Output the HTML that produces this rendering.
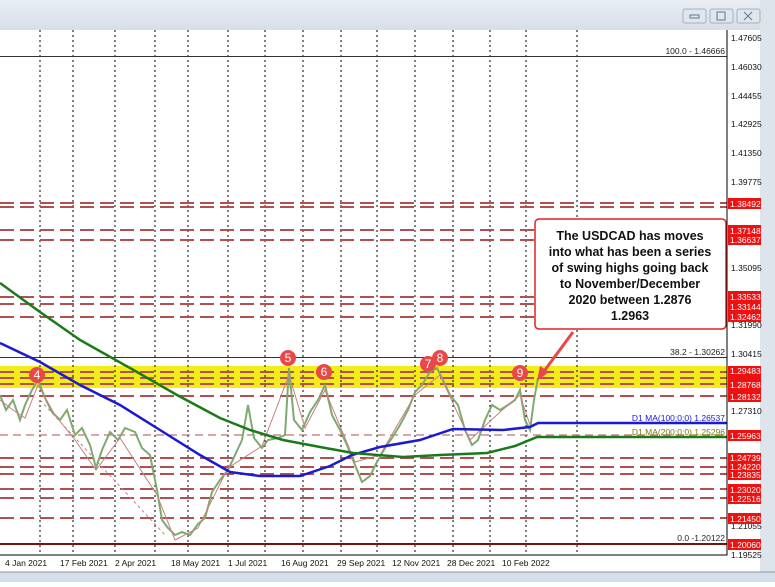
<!DOCTYPE html>
<html><head><meta charset="utf-8"><style>
body{margin:0;width:775px;height:582px;overflow:hidden;background:#fff;font-family:"Liberation Sans",sans-serif}
</style></head><body>
<svg width="775" height="582" xmlns="http://www.w3.org/2000/svg" font-family="Liberation Sans, sans-serif">
<defs><linearGradient id="tb" x1="0" y1="0" x2="0" y2="1"><stop offset="0" stop-color="#e9eef4"/><stop offset="1" stop-color="#d6dee8"/></linearGradient></defs>
<rect width="775" height="582" fill="#fff"/>
<rect width="775" height="30" fill="url(#tb)"/>
<rect x="760" y="0" width="15" height="582" fill="#dde4ec"/>
<rect x="0" y="572" width="775" height="10" fill="#d6dee8"/>
<line x1="0" y1="572" x2="775" y2="572" stroke="#8a96a6"/>
<g fill="#dfe6ee" stroke="#a4b0c0"><rect x="683" y="9" width="23" height="14" rx="2"/><rect x="710" y="9" width="23" height="14" rx="2"/><rect x="737" y="9" width="23" height="14" rx="2"/></g>
<g stroke="#6a7686" fill="none"><rect x="690" y="15" width="9" height="3"/><rect x="717" y="12" width="8" height="8"/><path d="M744 12l8 8M752 12l-8 8"/></g>
<rect x="0" y="30" width="727" height="525" fill="#fff"/>
<rect x="0" y="366" width="727" height="22" fill="#f3ec1a"/>
<g stroke="#000" stroke-width="1" stroke-dasharray="2,3">
<path d="M40 30V555M73 30V555M115 30V555M155 30V555M188 30V555M228 30V555M265 30V555M303 30V555M341 30V555M377 30V555M415 30V555M453 30V555M490 30V555M526 30V555M577 30V555"/></g>
<g stroke="#333" stroke-width="1"><path d="M0 56.5H727M0 357.5H727"/></g>
<path d="M0 544H727" stroke="#7a1010" stroke-width="2"/>
<g stroke="#b05050" stroke-width="2" stroke-dasharray="14,6">
<path d="M0 203H727M0 207H727M0 230H727M0 240H727M0 297H727M0 304H727M0 317H727M0 372H727M0 378H727M0 384H727M0 396H727M0 458H727M0 467H727M0 474H727M0 489H727M0 498H727M0 518H727"/></g>
<path d="M0 435H727" stroke="#b05050" stroke-width="1" stroke-dasharray="8,5"/>
<path d="M40 400L165 535" stroke="#c08080" stroke-dasharray="3,3" fill="none"/>
<polyline fill="none" stroke="#7faa6f" stroke-width="2" points="0,395 6,410 13,400 20,420 25,405 32,390 38,380 45,398 52,412 60,420 67,410 75,435 82,428 90,445 96,468 102,450 110,432 118,440 125,428 135,432 142,448 150,455 157,490 162,520 168,528 175,535 182,532 190,535 198,524 205,518 212,492 220,480 228,470 235,455 242,440 248,405 254,438 262,448 268,440 278,438 285,435 289,368 294,420 302,430 310,412 318,400 325,385 332,415 340,430 347,445 355,465 362,482 370,476 377,462 385,448 392,438 400,425 408,410 415,392 422,385 430,372 437,368 443,380 450,395 458,405 465,430 472,445 478,440 485,420 492,405 500,410 508,405 515,400 520,390 525,420 530,430 534,400 538,378"/>
<polyline fill="none" stroke="#c88080" stroke-width="1" points="0,400 13,410 25,418 38,385 55,415 75,440 96,470 120,438 157,495 175,540 198,528 228,468 262,446 289,375 305,428 325,390 355,462 380,455 415,395 440,375 470,440 500,412 520,395 530,425"/>
<polyline fill="none" stroke="#1a1ad0" stroke-width="2.5" points="0,343 40,362 80,385 120,405 160,430 200,455 230,472 260,476 300,476 330,466 352,455 380,447 420,440 453,429 503,430 530,427 538,423 727,423"/>
<polyline fill="none" stroke="#1a7a1a" stroke-width="2.5" points="0,283 40,312 80,340 130,368 177,395 220,418 250,430 283,440 320,447 353,453 403,457 440,455 487,453 515,446 537,437 727,437"/>
<g fill="#e84848"><circle cx="37" cy="375" r="8"/><circle cx="288" cy="358" r="8"/><circle cx="324" cy="372" r="8"/><circle cx="428" cy="364" r="8"/><circle cx="440" cy="358" r="8"/><circle cx="520" cy="373" r="8"/></g>
<g fill="#fff" font-size="12" text-anchor="middle"><text x="37" y="379">4</text><text x="288" y="362">5</text><text x="324" y="376">6</text><text x="428" y="368">7</text><text x="440" y="362">8</text><text x="520" y="377">9</text></g>
<g font-size="8.5" text-anchor="end"><text x="725" y="54" fill="#222">100.0 - 1.46666</text><text x="725" y="355" fill="#222">38.2 - 1.30262</text><text x="725" y="541" fill="#222">0.0 -1.20122</text><text x="725" y="421" fill="#1a1ad0">D1 MA(100;0;0) 1.26537</text><text x="725" y="435" fill="#7a7a10">D1 MA(200;0;0) 1.25296</text></g>
<rect x="535" y="219" width="191" height="110" rx="4" fill="#fff" stroke="#e02020" stroke-width="1.5"/>
<g font-size="12.5" font-weight="bold" text-anchor="middle" fill="#111">
<text x="630" y="240">The USDCAD has moves</text><text x="630" y="256">into what has been a series</text><text x="630" y="272">of swing highs going back</text><text x="630" y="288">to November/December</text><text x="630" y="304">2020 between 1.2876</text><text x="630" y="320">1.2963</text></g>
<path d="M573 332L542 374" stroke="#e84848" stroke-width="3"/>
<path d="M537 381L540 366L549 372Z" fill="#e84848"/>
<path d="M727 30V555H0" stroke="#000" fill="none"/>
<g font-size="8.5" fill="#111">
<text x="731" y="41">1.47605</text><text x="731" y="70">1.46030</text><text x="731" y="99">1.44455</text><text x="731" y="127">1.42925</text><text x="731" y="156">1.41350</text><text x="731" y="185">1.39775</text><text x="731" y="271">1.35095</text><text x="731" y="328">1.31990</text><text x="731" y="357">1.30415</text><text x="731" y="414">1.27310</text><text x="731" y="529">1.21055</text><text x="731" y="558">1.19525</text></g>
<g fill="#ee1111"><rect x="728" y="198" width="33" height="11"/><rect x="728" y="225" width="33" height="20"/><rect x="728" y="291" width="33" height="31"/><rect x="728" y="366" width="33" height="25"/><rect x="728" y="391" width="33" height="11"/><rect x="728" y="430" width="33" height="11"/><rect x="728" y="453" width="33" height="27"/><rect x="728" y="484" width="33" height="20"/><rect x="728" y="513" width="33" height="11"/><rect x="728" y="539" width="33" height="11"/></g>
<g font-size="8.5" fill="#fff">
<text x="730" y="207">1.38492</text><text x="730" y="234">1.37148</text><text x="730" y="243">1.36637</text><text x="730" y="300">1.33533</text><text x="730" y="310">1.33144</text><text x="730" y="320">1.32462</text><text x="730" y="374">1.29483</text><text x="730" y="388">1.28768</text><text x="730" y="400">1.28132</text><text x="730" y="439">1.25963</text><text x="730" y="461">1.24739</text><text x="730" y="470">1.24220</text><text x="730" y="478">1.23835</text><text x="730" y="493">1.23020</text><text x="730" y="502">1.22516</text><text x="730" y="522">1.21450</text><text x="730" y="548">1.20060</text></g>
<g font-size="8.5" fill="#111">
<text x="5" y="566">4 Jan 2021</text><text x="60" y="566">17 Feb 2021</text><text x="115" y="566">2 Apr 2021</text><text x="171" y="566">18 May 2021</text><text x="228" y="566">1 Jul 2021</text><text x="281" y="566">16 Aug 2021</text><text x="337" y="566">29 Sep 2021</text><text x="392" y="566">12 Nov 2021</text><text x="447" y="566">28 Dec 2021</text><text x="502" y="566">10 Feb 2022</text></g>
</svg>
</body></html>
